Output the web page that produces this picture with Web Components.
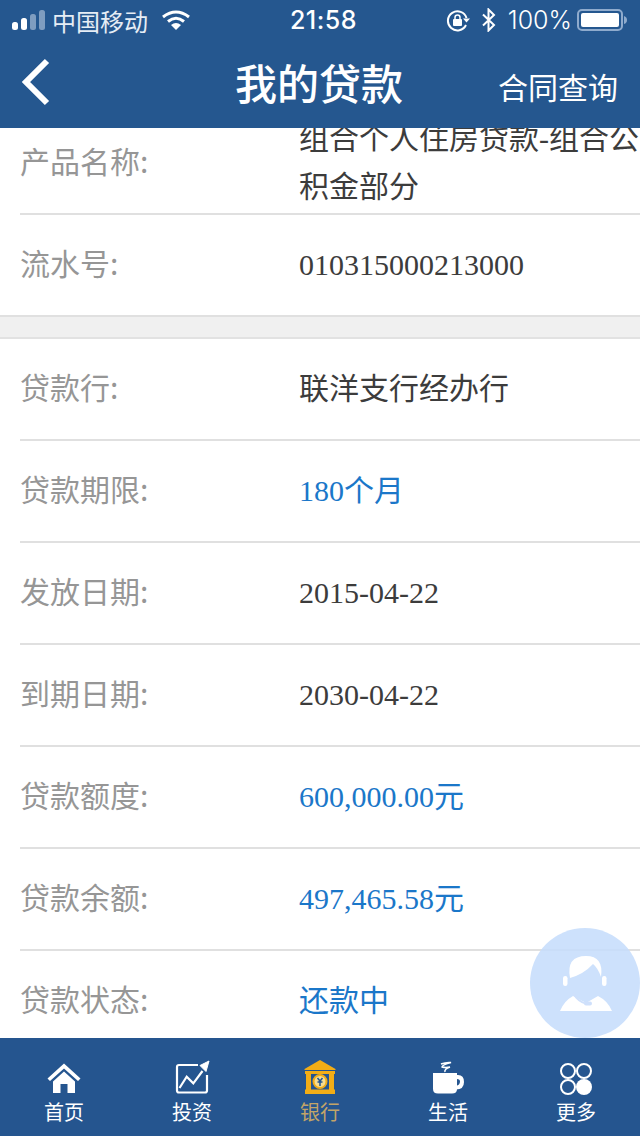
<!DOCTYPE html>
<html lang="zh">
<head>
<meta charset="utf-8">
<title>我的贷款</title>
<style>
    html, body {
        margin: 0;
        padding: 0;
        background: #fff;
    }

    body {
        font-family: "Noto Sans CJK SC", "Noto Sans", sans-serif;
    }
</style>
</head>
<body>
<loan-app>
    <status-bar slot="top"></status-bar>
    <nav-bar slot="top" heading="我的贷款" action="合同查询"></nav-bar>

    <info-section first>
        <info-row label="产品名称:">组合个人住房贷款-组合公积金部分</info-row>
        <info-row label="流水号:" last>010315000213000</info-row>
    </info-section>

    <info-section>
        <info-row label="贷款行:">联洋支行经办行</info-row>
        <info-row label="贷款期限:" accent>180个月</info-row>
        <info-row label="发放日期:">2015-04-22</info-row>
        <info-row label="到期日期:">2030-04-22</info-row>
        <info-row label="贷款额度:" accent>600,000.00元</info-row>
        <info-row label="贷款余额:" accent>497,465.58元</info-row>
        <info-row label="贷款状态:" accent>还款中</info-row>
    </info-section>

    <service-bubble slot="over"></service-bubble>

    <tab-bar slot="bottom">
        <tab-item label="首页">
            <svg viewBox="0 0 34 32" width="34" height="32" fill="#fff">
                <path d="M17 0.500 L33.500 15.500 L31 18 L17 5.500 L3 18 L0.500 15.500 Z"/>
                <path d="M17 8.500 L28 18.500 V30 H20.500 V21 H13.500 V30 H6 V18.500 Z"/>
            </svg>
        </tab-item>
        <tab-item label="投资">
            <svg viewBox="0 0 32 35" width="32" height="35" fill="none" stroke="#fff" stroke-width="2.200" style="overflow:visible">
                <path d="M22 5 H3 Q1 5 1 7 V30.500 Q1 32.500 3 32.500 H29 Q31 32.500 31 30.500 V15"/>
                <path d="M3.500 28 L10.700 16.700 L17.300 23.300 L26.500 11"/>
                <path d="M24 5.500 L33 1 L30 11.500 Z" fill="#fff" stroke-width="1"/>
            </svg>
        </tab-item>
        <tab-item label="银行" active>
            <svg viewBox="0 0 32 36" width="32" height="36">
                <path d="M16 1 L31.500 10 V11 H0.500 V10 Z" fill="#f2ad16"/>
                <rect x="1" y="12" width="30" height="3" fill="#f2ad16"/>
                <rect x="1" y="30.500" width="30" height="4.500" fill="#f2ad16"/>
                <rect x="2" y="15" width="5" height="16" fill="#f2ad16"/>
                <rect x="25" y="15" width="5" height="16" fill="#f2ad16"/>
                <circle cx="16" cy="22.500" r="6.500" fill="#f5dc90" stroke="#f2ad16" stroke-width="2"/>
                <path d="M13.500 19 L16 22 L18.500 19 M13.500 23 H18.500 M16 22 V27" stroke="#25558f" stroke-width="1.500" fill="none"/>
            </svg>
        </tab-item>
        <tab-item label="生活">
            <svg viewBox="0 0 32 35" width="32" height="35" fill="#fff">
                <path d="M9 4 Q14 2 19 2.500 Q10 5 10 7 Q14 8 18 7 Q12 9 13 12" fill="none" stroke="#fff" stroke-width="1.500"/>
                <path d="M1 13 H25 V29 Q25 33.500 20 33.500 H6 Q1 33.500 1 29 Z"/>
                <path d="M25 15 H26 Q32 15 32 22 Q32 29.500 24 29.500 V26 Q28 25 28 21.500 Q28 19 25 19 Z"/>
            </svg>
        </tab-item>
        <tab-item label="更多">
            <svg viewBox="0 0 32 32" width="32" height="32" fill="none" stroke="#fff" stroke-width="2">
                <circle cx="8" cy="8" r="7"/>
                <circle cx="24" cy="8" r="7"/>
                <circle cx="8" cy="24" r="7"/>
                <circle cx="24" cy="24" r="8" fill="#fff" stroke="none"/>
            </svg>
        </tab-item>
    </tab-bar>
</loan-app>

<script>
class LoanApp extends HTMLElement {
    constructor() {
        super();
        this.attachShadow({ mode: 'open' });
        this.shadowRoot.innerHTML = `
            <style>
                :host {
                    display: flex;
                    flex-direction: column;
                    position: relative;
                    width: 640px;
                    height: 1136px;
                    overflow: hidden;
                }

                header {
                    background: #25578f;
                    flex: none;
                }

                main {
                    flex: 1;
                    min-height: 0;
                    overflow: hidden;
                    background: #fff;
                }

                /* list is scrolled a little in the photo */
                .scrolled {
                    margin-top: -15px;
                }

                footer {
                    flex: none;
                }
            </style>
            <header><slot name="top"></slot></header>
            <main><div class="scrolled"><slot></slot></div></main>
            <slot name="over"></slot>
            <footer><slot name="bottom"></slot></footer>
        `;
    }
}

class StatusBar extends HTMLElement {
    constructor() {
        super();
        this.attachShadow({ mode: 'open' });
        this.shadowRoot.innerHTML = `
            <style>
                :host {
                    display: grid;
                    grid-template-columns: 1fr auto 1fr;
                    align-items: center;
                    height: 40px;
                    padding: 0 13px 0 12px;
                    color: #fff;
                    font-size: 24px;
                    font-family: "Noto Sans CJK SC", sans-serif;
                }

                .left, .right {
                    display: flex;
                    align-items: center;
                }

                .right {
                    justify-content: flex-end;
                }

                .carrier {
                    margin: 0 14px 0 6px;
                    color: #e6edf5;
                }

                .time {
                    font-family: "Inter", "Liberation Sans", sans-serif;
                    font-size: 25px;
                    font-weight: 500;
                    letter-spacing: 0.500px;
                    margin-left: 8px;
                }

                .percent {
                    font-family: "Inter", "Liberation Sans", sans-serif;
                    font-weight: 300;
                    font-size: 25px;
                    margin: 0 5px 0 12px;
                }

                svg {
                    display: block;
                }
            </style>
            <div class="left">
                <svg width="34" height="24" viewBox="0 0 34 24">
                    <rect x="0" y="14" width="6" height="8" rx="2.500" fill="#fff"/>
                    <rect x="9" y="10" width="6" height="12" rx="2.500" fill="#fff"/>
                    <rect x="18" y="6" width="6" height="16" rx="2.500" fill="#7f9dc0"/>
                    <rect x="27" y="2" width="6" height="20" rx="2.500" fill="#7f9dc0"/>
                </svg>
                <span class="carrier">中国移动</span>
                <svg width="28" height="20" viewBox="0 0 28 20" fill="none" stroke="#fff" stroke-width="3">
                    <path d="M1 7 Q14 -3 27 7"/>
                    <path d="M6 11.500 Q14 5 22 11.500"/>
                    <path d="M14 20 L9 15 Q14 11 19 15 Z" fill="#fff" stroke="none"/>
                </svg>
            </div>
            <div class="time">21:58</div>
            <div class="right">
                <svg width="24" height="24" viewBox="0 0 24 24" fill="none" stroke="#fff" stroke-width="2">
                    <path d="M20 17 A9.500 9.500 0 1 1 20.500 10"/>
                    <path d="M17 10.500 H24 L20.500 14.500 Z" fill="#fff" stroke="none"/>
                    <rect x="7" y="11" width="9" height="7" rx="1" fill="#fff" stroke="none"/>
                    <path d="M9 11 V9.500 Q9 7 11.500 7 Q14 7 14 9.500 V11" stroke-width="1.500"/>
                </svg>
                <svg style="margin-left:12px" width="14" height="24" viewBox="0 0 14 24" fill="none" stroke="#fff" stroke-width="2">
                    <path d="M1 6.500 L12 17 L6.500 22.500 V1.500 L12 7 L1 17.500"/>
                </svg>
                <span class="percent">100%</span>
                <svg width="50" height="24" viewBox="0 0 50 24">
                    <rect x="1" y="2" width="44" height="20" rx="4" fill="none" stroke="#8fabcd" stroke-width="2"/>
                    <rect x="4" y="5" width="38" height="14" rx="2" fill="#fff"/>
                    <path d="M47 8 Q50 9 50 12 Q50 15 47 16 Z" fill="#8fabcd"/>
                </svg>
            </div>
        `;
    }
}

class NavBar extends HTMLElement {
    constructor() {
        super();
        this.attachShadow({ mode: 'open' });
    }

    connectedCallback() {
        this.shadowRoot.innerHTML = `
            <style>
                :host {
                    display: grid;
                    grid-template-columns: 1fr auto 1fr;
                    align-items: center;
                    height: 88px;
                    padding: 0 22px;
                    color: #fff;
                }

                .back {
                    display: block;
                    margin: 0 0 4px -1px;
                }

                h1 {
                    margin: 0 2px 4px 0;
                    font-size: 42px;
                    font-weight: 500;
                    line-height: 84px;
                }

                .action {
                    justify-self: end;
                    font-size: 30px;
                    padding-top: 3px;
                }
            </style>
            <svg class="back" width="30" height="48" viewBox="0 0 30 48" fill="none" stroke="#fff" stroke-width="6">
                <path d="M26 3 L5 24 L26 45"/>
            </svg>
            <h1>${this.getAttribute('heading')}</h1>
            <div class="action">${this.getAttribute('action')}</div>
        `;
    }
}

class InfoSection extends HTMLElement {
    constructor() {
        super();
        this.attachShadow({ mode: 'open' });
        this.shadowRoot.innerHTML = `
            <style>
                :host {
                    display: block;
                    background: #fff;
                }

                :host(:not([first])) {
                    margin-top: 20px;
                    border-top: 2px solid #e2e2e2;
                    box-shadow: 0 -20px 0 #f0f0f0;
                }
            </style>
            <slot></slot>
        `;
    }
}

class InfoRow extends HTMLElement {
    constructor() {
        super();
        this.attachShadow({ mode: 'open' });
    }

    connectedCallback() {
        this.shadowRoot.innerHTML = `
            <style>
                :host {
                    display: block;
                    padding-left: 20px;
                    --rule: #e0e0e0;
                }

                :host([last]) {
                    padding-left: 0;
                }

                .row {
                    display: flex;
                    align-items: center;
                    box-sizing: border-box;
                    height: 102px;
                    border-bottom: 2px solid var(--rule);
                    font-size: 30px;
                    line-height: 48px;
                }

                :host([last]) .row {
                    padding-left: 20px;
                }

                .label {
                    flex: none;
                    width: 279px;
                    margin-bottom: 6px;
                    color: #969696;
                    font-family: "Noto Sans CJK SC", sans-serif;
                }

                .value {
                    flex: 1;
                    min-width: 0;
                    color: #3c3c3c;
                    font-family: "Liberation Serif", "Noto Sans CJK SC", serif;
                }

                :host([accent]) .value {
                    color: #1b77c9;
                }
            </style>
            <div class="row">
                <div class="label">${this.getAttribute('label')}</div>
                <div class="value"><slot></slot></div>
            </div>
        `;
    }
}

class ServiceBubble extends HTMLElement {
    constructor() {
        super();
        this.attachShadow({ mode: 'open' });
        this.shadowRoot.innerHTML = `
            <style>
                :host {
                    position: absolute;
                    left: 530px;
                    top: 928px;
                    width: 110px;
                    height: 110px;
                    border-radius: 50%;
                    background: rgba(196, 220, 252, 0.85);
                    display: flex;
                    align-items: center;
                    justify-content: center;
                }
            </style>
            <svg width="70" height="75" viewBox="0 0 70 75" fill="#fff">
                <path d="M20 32 Q16 10 36 10 Q54 10 51 31 Q48 22 43 18 Q34 28 20 32 Z"/>
                <rect x="13" y="30" width="4.500" height="10" rx="2.200"/>
                <rect x="52" y="30" width="4.500" height="10" rx="2.200"/>
                <path d="M10 65 Q14 55 23 50 L36 57 L48 50 Q58 55 62 65 Z"/>
                <path d="M23 47 Q28 56 37 58" fill="none" stroke="#cfe0fb" stroke-width="1.800"/>
                <rect x="34" y="55.500" width="8" height="4" rx="2" fill="#cfe0fb"/>
            </svg>
        `;
    }
}

class TabBar extends HTMLElement {
    constructor() {
        super();
        this.attachShadow({ mode: 'open' });
        this.shadowRoot.innerHTML = `
            <style>
                :host {
                    display: grid;
                    grid-template-columns: repeat(5, 1fr);
                    height: 98px;
                    background: #25558f;
                }
            </style>
            <slot></slot>
        `;
    }
}

class TabItem extends HTMLElement {
    constructor() {
        super();
        this.attachShadow({ mode: 'open' });
    }

    connectedCallback() {
        this.shadowRoot.innerHTML = `
            <style>
                :host {
                    display: flex;
                    flex-direction: column;
                    align-items: center;
                    color: #fff;
                }

                :host([active]) {
                    color: #c2a468;
                }

                .icon {
                    height: 38px;
                    margin-top: 19px;
                    display: flex;
                    align-items: flex-end;
                }

                .text {
                    margin-top: 4px;
                    font-size: 20px;
                    line-height: 26px;
                }
            </style>
            <div class="icon"><slot></slot></div>
            <div class="text">${this.getAttribute('label')}</div>
        `;
    }
}

customElements.define('loan-app', LoanApp);
customElements.define('status-bar', StatusBar);
customElements.define('nav-bar', NavBar);
customElements.define('info-section', InfoSection);
customElements.define('info-row', InfoRow);
customElements.define('service-bubble', ServiceBubble);
customElements.define('tab-bar', TabBar);
customElements.define('tab-item', TabItem);
</script>
</body>
</html>
